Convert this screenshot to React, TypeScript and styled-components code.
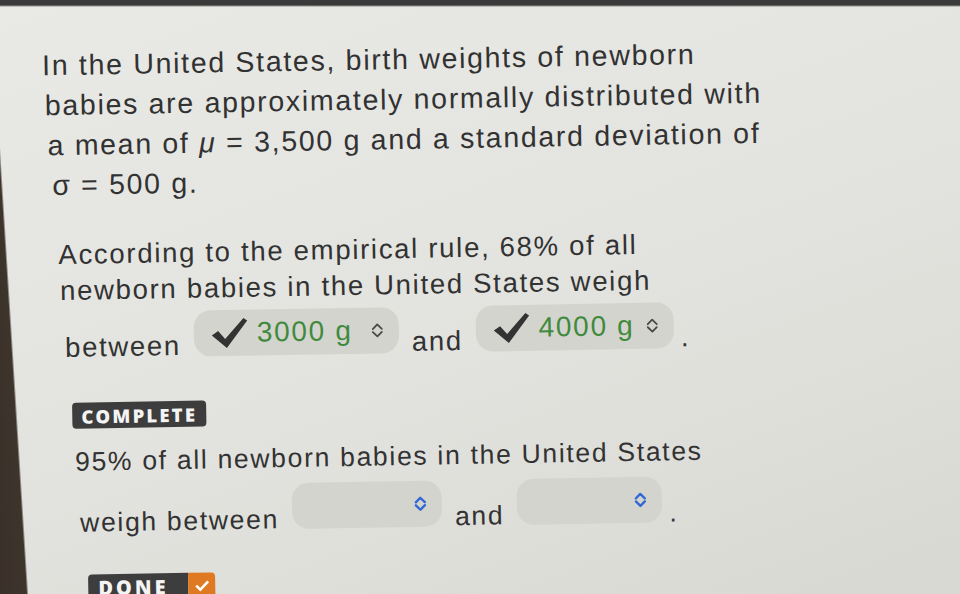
import styled, { createGlobalStyle } from 'styled-components';

const GlobalStyle = createGlobalStyle`
  html, body {
    margin: 0;
    padding: 0;
    height: 100%;
    overflow: hidden;
  }
`;

const Page = styled.div`
  position: relative;
  min-height: 100vh;
  overflow: hidden;
  background:
    linear-gradient(180deg, #3a3a3b 0, #3a3a3b 5px, rgba(58, 58, 59, 0) 7px),
    linear-gradient(86.4deg, #3a3029 0, #3d342c 27px, rgba(60, 52, 44, 0) 29px),
    linear-gradient(160deg, #e9e9e6 0%, #e2e2de 55%, #d8d8d3 100%);
`;

const Sheet = styled.div`
  padding-top: 46px;
  transform: rotate(-1deg);
  transform-origin: 0 0;
  font-family: "Liberation Sans", Arial, sans-serif;
  color: #323232;
`;

const Line = styled.div<{ $indent: number; $gap?: number; $size: number; $lh?: number }>`
  padding-left: ${(p) => p.$indent}px;
  margin-top: ${(p) => p.$gap ?? 0}px;
  font-size: ${(p) => p.$size}px;
  line-height: ${(p) => p.$lh ?? 40}px;
  letter-spacing: 1.7px;
  white-space: nowrap;
`;

const MathSym = styled.span`
  font-style: italic;
`;

const AnswerRow = styled.div<{ $indent: number; $gap: number; $size: number }>`
  display: flex;
  align-items: center;
  gap: 13px;
  padding-left: ${(p) => p.$indent}px;
  margin-top: ${(p) => p.$gap}px;
  height: 46px;
  font-size: ${(p) => p.$size}px;
  letter-spacing: 1.7px;
  white-space: nowrap;
`;

const RowText = styled.span<{ $drop: number }>`
  margin-top: ${(p) => p.$drop}px;
`;

const Period = styled(RowText)`
  margin-left: -6px;
`;

const Pill = styled.div<{ $w: number }>`
  display: inline-flex;
  align-items: center;
  box-sizing: border-box;
  width: ${(p) => p.$w}px;
  height: 46px;
  padding: 0 15px 0 16px;
  border-radius: 17px;
  background: #d4d4cf;
`;

const Value = styled.span`
  margin-left: 7px;
  color: #3f8a3c;
  font-size: 28px;
`;

const Spinner = styled.svg`
  margin-left: auto;
  flex-shrink: 0;
`;

const Badge = styled.div<{ $indent: number; $gap: number }>`
  display: flex;
  margin-left: ${(p) => p.$indent}px;
  margin-top: ${(p) => p.$gap}px;
`;

const BadgeLabel = styled.span`
  display: inline-flex;
  align-items: center;
  height: 26px;
  padding: 0 9px;
  background: #3d3d3d;
  color: #f4f4f4;
  font-family: "Open Sans", "Liberation Sans", sans-serif;
  font-weight: 800;
  font-size: 18.5px;
  letter-spacing: 2.2px;
  border-radius: 4px;
`;

const DoneLabel = styled(BadgeLabel)`
  width: 100px;
  box-sizing: border-box;
  padding-left: 10px;
  font-size: 20px;
  letter-spacing: 3px;
  border-radius: 4px 0 0 4px;
`;

const DoneMark = styled.span`
  display: inline-flex;
  align-items: center;
  justify-content: center;
  width: 27px;
  height: 26px;
  background: #e07a22;
  border-radius: 0 4px 4px 0;
`;

const CheckMark = () => (
  <svg width="40" height="34" viewBox="0 0 36 32">
    <path d="M1 18 L7 14 L13.5 21.5 L31 2 L34.5 4.5 L15 30 Z" fill="#333333" />
  </svg>
);

const UpDown = ({ color, stroke }: { color: string; stroke: number }) => (
  <Spinner width="13" height="16" viewBox="0 0 13 16">
    <path
      d="M2 6.5 L6.5 2 L11 6.5 M2 9.5 L6.5 14 L11 9.5"
      fill="none"
      stroke={color}
      strokeWidth={stroke}
      strokeLinecap="round"
      strokeLinejoin="round"
    />
  </Spinner>
);

const Answered = ({ value, w }: { value: string; w: number }) => (
  <Pill $w={w}>
    <CheckMark />
    <Value>{value}</Value>
    <UpDown color="#4a4a4a" stroke={1.8} />
  </Pill>
);

const Empty = ({ w }: { w: number }) => (
  <Pill $w={w}>
    <UpDown color="#3468d4" stroke={2.4} />
  </Pill>
);

export default function App() {
  return (
    <Page>
      <GlobalStyle />
      <Sheet>
        <Line $indent={41} $size={28.5}>In the United States, birth weights of newborn</Line>
        <Line $indent={43} $size={28.5}>babies are approximately normally distributed with</Line>
        <Line $indent={45} $size={28.5}>
          a mean of <MathSym>μ</MathSym> = 3,500 g and a standard deviation of
        </Line>
        <Line $indent={49} $size={28.5}>σ = 500 g.</Line>

        <Line $indent={54} $gap={32} $size={27.5} $lh={36}>
          According to the empirical rule, 68% of all
        </Line>
        <Line $indent={55} $size={27.5} $lh={36}>newborn babies in the United States weigh</Line>
        <AnswerRow $indent={59} $gap={4} $size={27.5}>
          <RowText $drop={24}>between</RowText>
          <Answered value="3000 g" w={205} />
          <RowText $drop={24}>and</RowText>
          <Answered value="4000 g" w={198} />
          <Period $drop={24}>.</Period>
        </AnswerRow>

        <Badge $indent={65} $gap={44}>
          <BadgeLabel>COMPLETE</BadgeLabel>
        </Badge>

        <Line $indent={67} $gap={13} $size={26.5}>
          95% of all newborn babies in the United States
        </Line>
        <AnswerRow $indent={71} $gap={5} $size={26.5}>
          <RowText $drop={27}>weigh between</RowText>
          <Empty w={150} />
          <RowText $drop={27}>and</RowText>
          <Empty w={145} />
          <Period $drop={27}>.</Period>
        </AnswerRow>

        <Badge $indent={78} $gap={42}>
          <DoneLabel>DONE</DoneLabel>
          <DoneMark>
            <svg width="16" height="12" viewBox="0 0 16 12">
              <path d="M2 6 L6 10 L14 2" fill="none" stroke="#ffffff" strokeWidth="2.6" />
            </svg>
          </DoneMark>
        </Badge>
      </Sheet>
    </Page>
  );
}
